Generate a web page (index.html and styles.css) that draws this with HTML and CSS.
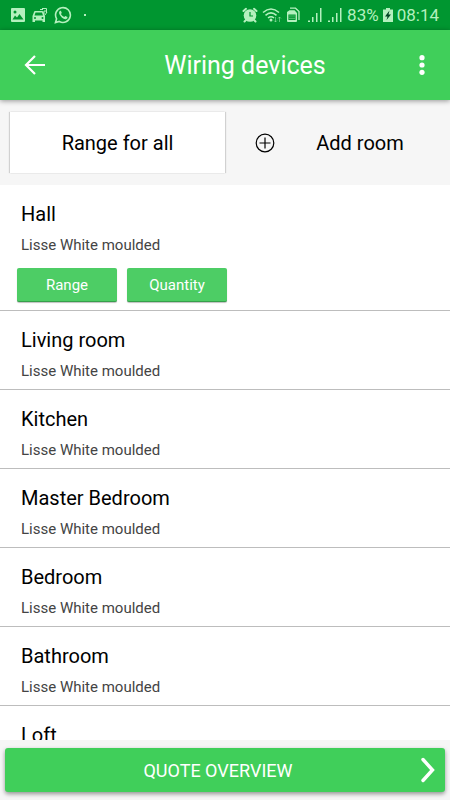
FILE: index.html
```html
<!DOCTYPE html>
<html lang="en">
<head>
<meta charset="utf-8">
<meta name="viewport" content="width=device-width, initial-scale=1">
<title>Wiring devices</title>
<link rel="stylesheet" href="styles.css">
</head>
<body>
<div class="status">
  <div class="status-group notices">
    <svg width="16" height="16" viewBox="0 0 16 16"><path fill="currentColor" fill-rule="evenodd" d="M2 1H14Q15 1 15 2V14Q15 15 14 15H2Q1 15 1 14V2Q1 1 2 1ZM2.500 12.500H13.500L9.500 7L7 10.500L5 8.500ZM5 3.500A1.500 1.500 0 1 0 5 6.500A1.500 1.500 0 1 0 5 3.500Z"/></svg>
    <svg width="18" height="16" viewBox="0 0 18 16"><path fill="currentColor" fill-rule="evenodd" d="M4 4H11Q12 4 12.500 5L14 9V15H11.500V13.500H4V15H1.500V9L3 5Q3.300 4 4 4ZM4.500 5.500L3.500 8.500H12L11 5.500ZM4 10A1 1 0 1 0 4 12A1 1 0 1 0 4 10ZM11.500 10A1 1 0 1 0 11.500 12A1 1 0 1 0 11.500 10Z"/><path fill="none" stroke="currentColor" d="M9 2.500H12M11 1.500H15.500V6M13 7V4H16M14 8L16 5"/></svg>
    <svg width="18" height="18" viewBox="0 0 18 18"><path fill="none" stroke="currentColor" stroke-width="1.600" d="M1.500 16.500L2.600 12.800A7.400 7.400 0 1 1 5.200 15.400Z"/><path fill="currentColor" d="M6.300 4.700Q5 5.200 5 7Q5.500 9.500 8 11.800Q10.500 13.700 12.300 13Q13.700 12.300 13.500 11L11.300 9.900L10.200 11.100Q8 10.200 6.900 8L7.800 7L6.900 4.700Z"/></svg>
    <span class="dot"></span>
  </div>
  <div class="status-group">
    <svg width="16" height="16" viewBox="0 0 16 16"><circle cx="8" cy="8.500" r="6.300" fill="currentColor"/><path stroke="currentColor" stroke-width="2" stroke-linecap="round" d="M1.500 4L4 1.800M14.500 4L12 1.800M4 13L2.500 14.500M12 13L13.500 14.500"/><path class="cut" d="M8 5V9H11"/></svg>
    <svg width="20" height="16" viewBox="0 0 20 16"><g fill="none" stroke="currentColor" stroke-width="1.600"><path d="M1 5.500Q9 -1.500 17 5.500M3.500 8.300Q9 3.500 14.500 8.300M6 11Q9 8.500 12 11"/></g><circle cx="9" cy="13" r="1.500" fill="currentColor"/><path fill="none" stroke="currentColor" opacity=".5" d="M13.500 10V15M12 13.500L13.500 15L15 13.500M17.500 15V10M16 11.500L17.500 10L19 11.500"/></svg>
    <svg class="sim" width="14" height="16" viewBox="0 0 14 16"><path fill="none" stroke="currentColor" stroke-width="1.300" d="M4 1.200H9.500L13 4.500V13"/><path fill="currentColor" d="M1 5L3.500 3.200H8.500L11 6V14Q11 15 10 15H2Q1 15 1 14Z"/><path class="cut" d="M3 8H9V12.500H3ZM5 8V12.500M7 8V12.500M3 10.200H9"/></svg>
    <svg width="16" height="16" viewBox="0 0 16 16"><path fill="currentColor" d="M1 13.500H3V15H1ZM5 10H6.500V15H5ZM9 6H10.500V15H9ZM13 1H14.500V15H13Z"/></svg>
    <svg width="16" height="16" viewBox="0 0 16 16"><path fill="currentColor" d="M1 13.500H3V15H1ZM5 10H6.500V15H5ZM9 6H10.500V15H9ZM13 1H14.500V15H13Z"/></svg>
    <span class="reading">83%</span>
    <svg class="battery" width="10" height="16" viewBox="0 0 10 16"><path fill="currentColor" d="M3 1H7V2.500H10V15H0V2.500H3Z"/><path fill="#042" d="M6.500 3.500L2 9.500H4.500L3.500 13L8 7.500H5.500Z"/></svg>
    <span class="reading">08:14</span>
  </div>
</div>
<header class="appbar">
  <button class="icon-btn" aria-label="Back"><svg width="22" height="20" viewBox="0 0 22 20"><path fill="none" stroke="currentColor" stroke-width="2.200" d="M21 10H2.500M11 1L2 10L11 19"/></svg></button>
  <h1>Wiring devices</h1>
  <button class="icon-btn" aria-label="More options"><svg width="6" height="20" viewBox="0 0 6 20"><g fill="currentColor"><circle cx="3" cy="2.700" r="2.600"/><circle cx="3" cy="10" r="2.600"/><circle cx="3" cy="17.300" r="2.600"/></g></svg></button>
</header>
<div class="tools">
  <button class="tool raised">Range for all</button>
  <button class="tool add"><svg width="20" height="20" viewBox="0 0 20 20"><g fill="none" stroke="currentColor" stroke-width="1.200"><circle cx="10" cy="10" r="8.800"/><path d="M10 4.500V15.500M4.500 10H15.500"/></g></svg><span>Add room</span></button>
</div>
<main class="rooms">
  <section class="room"><h2>Hall</h2><p>Lisse White moulded</p>
    <div class="actions"><button>Range</button><button>Quantity</button></div></section>
  <section class="room"><h2>Living room</h2><p>Lisse White moulded</p></section>
  <section class="room"><h2>Kitchen</h2><p>Lisse White moulded</p></section>
  <section class="room"><h2>Master Bedroom</h2><p>Lisse White moulded</p></section>
  <section class="room"><h2>Bedroom</h2><p>Lisse White moulded</p></section>
  <section class="room"><h2>Bathroom</h2><p>Lisse White moulded</p></section>
  <section class="room"><h2>Loft</h2></section>
</main>
<footer class="bottom">
  <button class="quote"><span>QUOTE OVERVIEW</span><svg width="16" height="26" viewBox="0 0 16 26"><path fill="none" stroke="currentColor" stroke-width="3.400" stroke-linecap="round" d="M3 2.500L12.500 13L3 23.500"/></svg></button>
</footer>
</body>
</html>
```
FILE: styles.css
```css
* { box-sizing: border-box; }
body {
  margin: 0;
  height: 100vh;
  display: flex;
  flex-direction: column;
  overflow: hidden;
  background: #fff;
  color: #000;
  font-family: Roboto, "Liberation Sans", sans-serif;
}
button {
  margin: 0;
  padding: 0;
  border: 0;
  background: none;
  color: inherit;
  font: inherit;
  cursor: pointer;
}
h1, h2, p { margin: 0; font-weight: 400; }
svg { display: block; flex: none; }

.status {
  flex: none;
  height: 30px;
  padding: 0 11px 0 10px;
  display: flex;
  align-items: center;
  justify-content: space-between;
  background: #009630;
  color: #b4f0be;
}
.status-group { display: flex; align-items: center; gap: 4px; }
.notices { gap: 5px; }
.dot { width: 2px; height: 2px; margin-left: 7px; background: currentColor; }
.cut { fill: none; stroke: #009630; stroke-width: 1.2; }
.sim { margin-right: 3px; }
.battery { margin: 0; }
.reading { font-size: 17px; line-height: 30px; }

.appbar {
  flex: none;
  position: relative;
  height: 70px;
  padding: 0 10px;
  display: flex;
  align-items: center;
  background: #40cf5a;
  color: #fff;
  box-shadow: 0 1px 5px rgba(0, 0, 0, .4);
}
.appbar h1 {
  flex: 1;
  padding: 2px 0 0 26px;
  font-size: 25px;
  line-height: 32px;
  text-align: center;
}
.icon-btn { width: 50px; height: 50px; display: grid; place-items: center; }
.icon-btn:last-child { width: 36px; }

.tools {
  flex: none;
  height: 85px;
  padding: 12px 10px;
  display: grid;
  grid-template-columns: 1fr 1fr;
  background: #f6f6f6;
  font-size: 20px;
}
.raised {
  background: #fff;
  box-shadow: -1px 0 1px rgba(0, 0, 0, .15), 1px 0 1px rgba(0, 0, 0, .15);
}
.add { display: flex; align-items: center; padding-left: 30px; }
.add span { flex: 1; padding-left: 5px; }

.rooms { flex: 1; min-height: 0; overflow: hidden; }
.room { padding: 15px 17px; height: 79px; border-bottom: 1px solid #bdbdbd; }
.room:first-child { height: auto; padding-bottom: 8px; }
.room h2 { padding-left: 4px; font-size: 20px; line-height: 28px; }
.room p { padding-left: 4px; font-size: 15px; line-height: 34px; color: #444; }
.actions { display: flex; gap: 10px; margin-top: 6px; }
.actions button {
  width: 100px;
  height: 34px;
  border-radius: 2px;
  border-bottom: 1px solid #36a04c;
  background: #4dcd65;
  color: #fff;
  font-size: 15px;
  box-shadow: 0 1px 1px rgba(0, 0, 0, .25);
}

.bottom { flex: none; padding: 8px 5px; background: #f6f6f6; }
.quote {
  width: 100%;
  height: 44px;
  padding: 0 9px 0 11px;
  display: flex;
  align-items: center;
  border-radius: 3px;
  background: #40cf5a;
  color: #fff;
  font-size: 18px;
  box-shadow: 0 2px 4px rgba(0, 0, 0, .4);
}
.quote span { flex: 1; }
```
